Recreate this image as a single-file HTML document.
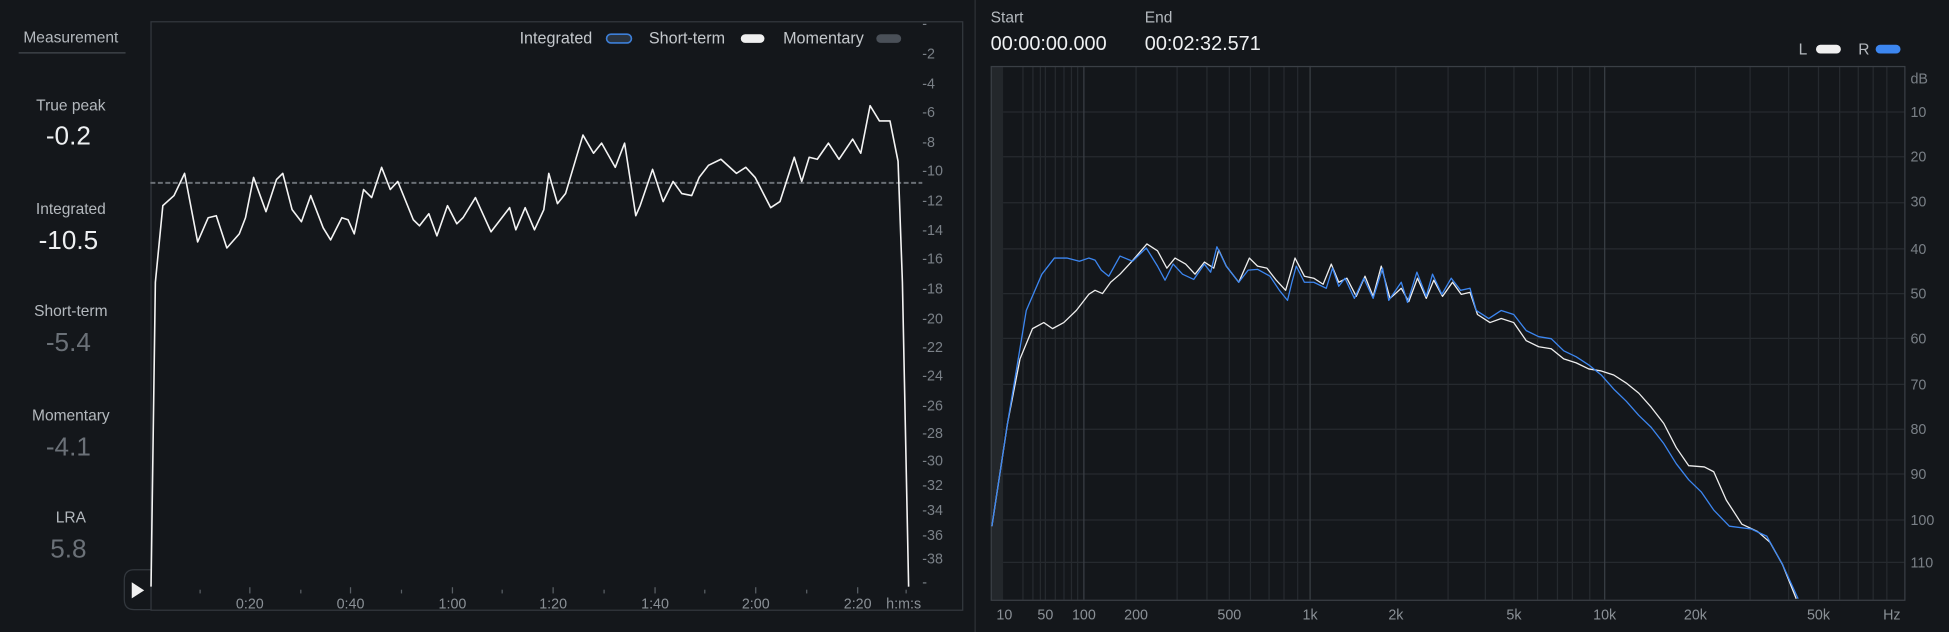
<!DOCTYPE html>
<html><head><style>
html,body{margin:0;padding:0;background:#14171b;width:1949px;height:632px;overflow:hidden}
svg{display:block}
text{font-family:"Liberation Sans",sans-serif}
</style></head><body>
<svg width="1949" height="632" viewBox="0 0 1568 508" preserveAspectRatio="none">
<rect width="1568" height="508" fill="#14171b"/>
<!-- left sidebar -->
<g text-anchor="middle" fill="#b4b9be" font-size="12.5">
<text x="57" y="34">Measurement</text>
<text x="57" y="89">True peak</text>
<text x="57" y="172">Integrated</text>
<text x="57" y="254">Short-term</text>
<text x="57" y="338">Momentary</text>
<text x="57" y="420">LRA</text>
</g>
<line x1="15" y1="42.5" x2="101" y2="42.5" stroke="#454a50"/>
<g text-anchor="middle" font-size="21">
<text x="55" y="116" fill="#eef0f2">-0.2</text>
<text x="55" y="200" fill="#eef0f2">-10.5</text>
<text x="55" y="282" fill="#6b7178">-5.4</text>
<text x="55" y="366" fill="#6b7178">-4.1</text>
<text x="55" y="448" fill="#6b7178">5.8</text>
</g>
<!-- graph box -->
<rect x="121.5" y="17.5" width="653" height="473" fill="none" stroke="#33383e"/>
<path d="M121 458 L108 458 Q100 458 100 466 L100 482 Q100 490 108 490 L121 490" fill="none" stroke="#33383e"/>
<path d="M106 468 L116 474.5 L106 481 Z" fill="#f0f0f0"/>
<!-- legend -->
<g font-size="13" fill="#c4c8cc">
<text x="418" y="35">Integrated</text>
<text x="522" y="35">Short-term</text>
<text x="630" y="35">Momentary</text>
</g>
<rect x="488" y="27.5" width="20" height="7" rx="3.5" fill="#2a3440" stroke="#3d7fd8" stroke-width="1.3"/>
<rect x="596" y="27.5" width="19" height="7" rx="3.5" fill="#f0f0f0"/>
<rect x="705" y="27.5" width="20" height="7" rx="3.5" fill="#4a5058"/>
<!-- y labels -->
<g font-size="11.5" fill="#7a8087">
<text x="742" y="23">-</text>
<text x="742" y="47">-2</text><text x="742" y="71">-4</text><text x="742" y="94">-6</text>
<text x="742" y="118">-8</text><text x="742" y="141">-10</text><text x="742" y="165">-12</text>
<text x="742" y="189">-14</text><text x="742" y="212">-16</text><text x="742" y="236">-18</text>
<text x="742" y="260">-20</text><text x="742" y="283">-22</text><text x="742" y="306">-24</text>
<text x="742" y="330">-26</text><text x="742" y="352">-28</text><text x="742" y="374">-30</text>
<text x="742" y="394">-32</text><text x="742" y="414">-34</text><text x="742" y="434">-36</text>
<text x="742" y="453">-38</text><text x="742" y="472">-</text>
</g>
<!-- time axis -->
<g stroke="#5a6066">
<line x1="161" y1="474" x2="161" y2="477"/><line x1="201" y1="472" x2="201" y2="477"/>
<line x1="242" y1="474" x2="242" y2="477"/><line x1="282" y1="472" x2="282" y2="477"/>
<line x1="323" y1="474" x2="323" y2="477"/><line x1="364" y1="472" x2="364" y2="477"/>
<line x1="404" y1="474" x2="404" y2="477"/><line x1="445" y1="472" x2="445" y2="477"/>
<line x1="486" y1="474" x2="486" y2="477"/><line x1="527" y1="472" x2="527" y2="477"/>
<line x1="567" y1="474" x2="567" y2="477"/><line x1="608" y1="472" x2="608" y2="477"/>
<line x1="649" y1="474" x2="649" y2="477"/><line x1="690" y1="472" x2="690" y2="477"/>
<line x1="729" y1="474" x2="729" y2="477"/>
</g>
<g font-size="11.5" fill="#8a9096" text-anchor="middle">
<text x="201" y="489">0:20</text><text x="282" y="489">0:40</text><text x="364" y="489">1:00</text>
<text x="445" y="489">1:20</text><text x="527" y="489">1:40</text><text x="608" y="489">2:00</text>
<text x="690" y="489">2:20</text><text x="727" y="489">h:m:s</text>
</g>
<line x1="121" y1="147" x2="742" y2="147" stroke="#6a6f75" stroke-width="1.6" stroke-dasharray="4 2"/>
<g transform="scale(0.5 0.3241)">
<polyline fill="none" stroke="#f4f4f4" stroke-width="1.6" vector-effect="non-scaling-stroke" stroke-linejoin="round" points="243,1455 250,700 262,510 280,485 297,430 318,600 335,540 348,535 365,615 385,580 395,540 408,440 428,525 445,445 455,430 470,520 485,550 500,485 520,565 532,595 550,540 560,545 570,580 585,470 598,490 614,415 628,470 640,450 665,545 675,560 690,530 703,585 720,510 735,555 745,540 765,490 790,575 805,545 820,515 830,570 845,515 860,570 875,520 883,430 897,505 910,480 938,335 955,380 968,355 990,415 1005,355 1023,535 1030,510 1050,420 1067,500 1083,450 1097,480 1113,485 1125,440 1140,410 1160,395 1185,430 1200,415 1215,440 1240,515 1255,500 1278,390 1290,450 1302,390 1315,395 1333,355 1350,395 1372,345 1385,380 1400,262 1415,300 1432,300 1445,400 1452,700 1462,1455"/>
</g>
<!-- divider -->
<line x1="784.5" y1="0" x2="784.5" y2="508" stroke="#2e3237"/>
<!-- right header -->
<g font-size="12.5" fill="#b4b9be"><text x="797" y="18">Start</text><text x="921" y="18">End</text><text x="1447" y="44">L</text><text x="1495" y="44">R</text></g>
<g font-size="16" fill="#eef0f2"><text x="797" y="40">00:00:00.000</text><text x="921" y="40">00:02:32.571</text></g>
<rect x="1461" y="36" width="20" height="7" rx="3.5" fill="#f0f0f0"/>
<rect x="1509" y="36" width="20" height="7" rx="3.5" fill="#3c86f0"/>
<!-- spectrum -->
<rect x="797" y="53" width="10" height="429" fill="#23272b"/>
<g stroke="#262a2f" stroke-width="1">
<line x1="823" y1="53" x2="823" y2="482"/><line x1="831" y1="53" x2="831" y2="482"/><line x1="837" y1="53" x2="837" y2="482"/><line x1="841" y1="53" x2="841" y2="482"/><line x1="849" y1="53" x2="849" y2="482"/><line x1="856" y1="53" x2="856" y2="482"/><line x1="862" y1="53" x2="862" y2="482"/><line x1="867" y1="53" x2="867" y2="482"/>
<line x1="914" y1="53" x2="914" y2="482"/><line x1="947" y1="53" x2="947" y2="482"/><line x1="971" y1="53" x2="971" y2="482"/><line x1="989" y1="53" x2="989" y2="482"/><line x1="1006" y1="53" x2="1006" y2="482"/><line x1="1021" y1="53" x2="1021" y2="482"/><line x1="1033" y1="53" x2="1033" y2="482"/><line x1="1044" y1="53" x2="1044" y2="482"/>
<line x1="1123" y1="53" x2="1123" y2="482"/><line x1="1165" y1="53" x2="1165" y2="482"/><line x1="1195" y1="53" x2="1195" y2="482"/><line x1="1218" y1="53" x2="1218" y2="482"/><line x1="1237" y1="53" x2="1237" y2="482"/><line x1="1253" y1="53" x2="1253" y2="482"/><line x1="1265" y1="53" x2="1265" y2="482"/><line x1="1279" y1="53" x2="1279" y2="482"/>
<line x1="1364" y1="53" x2="1364" y2="482"/><line x1="1408" y1="53" x2="1408" y2="482"/><line x1="1439" y1="53" x2="1439" y2="482"/><line x1="1463" y1="53" x2="1463" y2="482"/><line x1="1480" y1="53" x2="1480" y2="482"/><line x1="1495" y1="53" x2="1495" y2="482"/><line x1="1507" y1="53" x2="1507" y2="482"/><line x1="1518" y1="53" x2="1518" y2="482"/>
<line x1="807" y1="90" x2="1532" y2="90"/><line x1="807" y1="126" x2="1532" y2="126"/><line x1="807" y1="163" x2="1532" y2="163"/><line x1="807" y1="200" x2="1532" y2="200"/><line x1="807" y1="236" x2="1532" y2="236"/><line x1="807" y1="272" x2="1532" y2="272"/><line x1="807" y1="309" x2="1532" y2="309"/><line x1="807" y1="345" x2="1532" y2="345"/><line x1="807" y1="381" x2="1532" y2="381"/><line x1="807" y1="418" x2="1532" y2="418"/><line x1="807" y1="452" x2="1532" y2="452"/>
</g>
<g stroke="#3a3f45"><line x1="872" y1="53" x2="872" y2="482"/><line x1="1054" y1="53" x2="1054" y2="482"/><line x1="1291" y1="53" x2="1291" y2="482"/></g>
<rect x="797.5" y="53.5" width="735" height="429" fill="none" stroke="#3a3f45"/>
<g font-size="11.5" fill="#7a8087">
<text x="1537" y="67">dB</text><text x="1537" y="94">10</text><text x="1537" y="130">20</text><text x="1537" y="166">30</text><text x="1537" y="204">40</text><text x="1537" y="240">50</text><text x="1537" y="276">60</text><text x="1537" y="313">70</text><text x="1537" y="349">80</text><text x="1537" y="385">90</text><text x="1537" y="422">100</text><text x="1537" y="456">110</text>
</g>
<g font-size="11.5" fill="#8a9096" text-anchor="middle">
<text x="808" y="498">10</text><text x="841" y="498">50</text><text x="872" y="498">100</text><text x="914" y="498">200</text><text x="989" y="498">500</text><text x="1054" y="498">1k</text><text x="1123" y="498">2k</text><text x="1218" y="498">5k</text><text x="1291" y="498">10k</text><text x="1364" y="498">20k</text><text x="1463" y="498">50k</text><text x="1522" y="498">Hz</text>
</g>
<g transform="translate(780.4 0) scale(0.5028 0.3241)">
<polyline fill="none" stroke="#eeeeee" stroke-width="1.3" vector-effect="non-scaling-stroke" stroke-linejoin="round" points="35,1305 60,1050 80,890 100,815 118,800 132,815 150,800 170,770 190,730 200,720 212,728 225,700 240,680 258,650 283,605 300,622 315,665 328,640 345,655 360,680 375,650 390,665 398,620 410,660 430,700 447,640 460,660 475,665 490,695 505,720 520,640 535,685 550,690 565,705 578,655 590,700 603,690 618,735 632,685 645,735 658,660 672,740 690,715 702,748 716,690 730,740 742,695 756,735 772,700 786,730 800,725 812,780 832,800 850,790 870,800 890,845 910,860 930,865 950,890 970,900 990,915 1010,920 1030,930 1050,950 1070,975 1090,1010 1110,1050 1130,1110 1150,1155 1175,1158 1190,1170 1210,1240 1235,1300 1260,1318 1280,1345 1300,1400 1322,1485"/>
<polyline fill="none" stroke="#3c86f0" stroke-width="1.3" vector-effect="non-scaling-stroke" stroke-linejoin="round" points="35,1305 60,1050 90,770 115,680 135,640 155,640 175,648 190,640 200,645 210,670 222,685 240,635 260,648 282,615 300,660 312,695 325,655 340,680 358,693 375,655 385,675 395,612 410,660 430,700 445,670 460,668 480,685 495,720 508,745 515,700 522,660 535,700 550,700 570,715 580,665 590,710 600,690 615,740 630,690 645,740 660,665 670,745 690,700 700,750 715,675 730,735 740,680 755,730 770,690 785,720 800,715 810,770 830,790 850,770 870,780 890,820 910,835 930,840 950,870 970,885 990,905 1010,930 1030,965 1050,995 1070,1030 1090,1060 1110,1100 1130,1150 1150,1190 1170,1220 1190,1265 1215,1305 1250,1312 1275,1330 1300,1400 1325,1485"/>
</g>
</svg>
</body></html>
